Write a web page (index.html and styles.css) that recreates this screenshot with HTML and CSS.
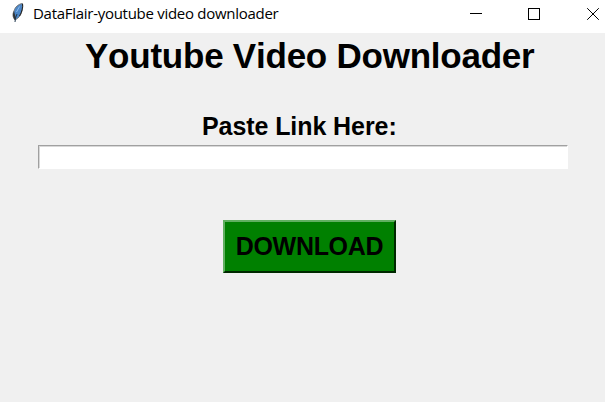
FILE: index.html
```html
<!DOCTYPE html>
<html lang="en">
<head>
<meta charset="utf-8">
<title>DataFlair-youtube video downloader</title>
<link rel="stylesheet" href="styles.css">
</head>
<body>
<header class="titlebar">
  <svg class="feather" width="14" height="22" viewBox="0 0 14 22">
    <path d="M12.5 1.500C8.500 2 5 5 4 9C2.500 12 2.500 15 5 18C9 16 11 13 12 9C12.700 6 13 4 12.500 1.500Z" fill="#4c86c6" stroke="#777" stroke-width="1"/>
    <path d="M4 9C2.500 12 2.500 15 5 18L6 16L5 13Z" fill="#333"/>
    <path d="M12.500 2C13 5 12 10 9.500 14" stroke="#222" stroke-width="1" fill="none"/>
    <path d="M7 12L5.500 16L5 20" stroke="#20384f" stroke-width="1" fill="none"/>
    <path d="M9.500 4.500L6.500 10" stroke="#8bbcf0" stroke-width="1" fill="none"/>
  </svg>
  <span class="caption">DataFlair-youtube video downloader</span>
  <svg class="controls" width="135" height="33" viewBox="0 0 135 33" fill="none" stroke="#000">
    <path d="M0 13.5H12"/>
    <rect x="58.5" y="8.5" width="11" height="11"/>
    <path d="M117.2 8.2L128.8 19.8M128.8 8.2L117.2 19.8"/>
  </svg>
</header>
<main class="content">
  <h1 class="heading">Youtube Video Downloader</h1>
  <label class="prompt" for="link">Paste Link Here:</label>
  <input class="entry" id="link" type="text">
  <button class="download">DOWNLOAD</button>
</main>
</body>
</html>
```
FILE: styles.css
```css
* { box-sizing: border-box; }
body {
  margin: 0;
  height: 402px;
  overflow: hidden;
  display: flex;
  flex-direction: column;
  background: #f0f0f0;
  color: #000;
  font-family: "Liberation Sans", Arial, sans-serif;
}
.titlebar {
  height: 33px;
  flex: none;
  display: flex;
  background: #fff;
}
.feather { margin: 2px 0 0 10px; flex: none; }
.caption {
  margin-left: 9px;
  font: 15px/27px "Open Sans", sans-serif;
  letter-spacing: -0.28px;
  white-space: nowrap;
}
.controls { margin-left: auto; flex: none; }
.content { display: flex; flex-direction: column; }
.heading {
  margin: 3px 0 0 85px;
  font-size: 35px;
  line-height: 40px;
  letter-spacing: -0.23px;
  font-kerning: none;
  white-space: nowrap;
}
.prompt {
  margin: 35px 0 0 202px;
  font-size: 25px;
  font-weight: bold;
  line-height: 31px;
  letter-spacing: -0.08px;
}
.entry {
  margin: 3px 0 0 38px;
  width: 530px;
  height: 24px;
  border: 1px solid;
  border-color: #a0a0a0 #fff #fff #a0a0a0;
  box-shadow: inset 1px 1px #d8d8d8;
  background: #fff;
}
.download {
  margin: 51px 0 0 223px;
  width: 173px;
  height: 53px;
  padding: 0;
  border: 2px solid;
  border-color: #60b060 #002800 #002800 #60b060;
  background: #008000;
  color: #000;
  font: bold 25px "Liberation Sans", Arial, sans-serif;
  letter-spacing: -0.3px;
}
```
